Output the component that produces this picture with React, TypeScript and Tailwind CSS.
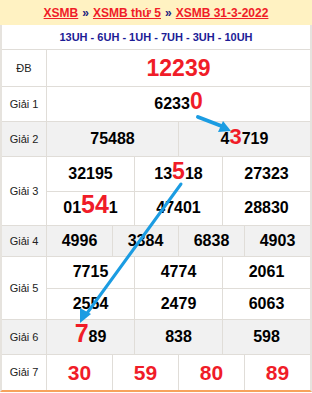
import React from "react";

const R = ({ children, size }: { children: React.ReactNode; size: string }) => (
  <span className={`${size} leading-[0] text-[#f01c28]`}>{children}</span>
);

function Cell({ children, last }: { children: React.ReactNode; last?: boolean }) {
  return (
    <div className={`flex flex-1 items-center justify-center ${last ? "" : "border-r border-[#e0ddd8]"}`}>
      {children}
    </div>
  );
}

function Row({
  label,
  gray,
  h,
  children,
}: {
  label: string;
  gray?: boolean;
  h: string;
  children: React.ReactNode;
}) {
  return (
    <div className={`flex ${h} border-b border-[#e0ddd8] ${gray ? "bg-[#f1f1f1]" : "bg-white"}`}>
      <div className="flex w-[45px] shrink-0 items-center justify-center border-r border-[#e0ddd8] text-[11px] font-normal text-[#222]">
        {label}
      </div>
      <div className="flex flex-1 flex-col">{children}</div>
    </div>
  );
}

function Line({ cells, border }: { cells: React.ReactNode[]; border?: boolean }) {
  return (
    <div className={`flex flex-1 ${border ? "border-b border-[#e0ddd8]" : ""}`}>
      {cells.map((c, i) => (
        <Cell key={i} last={i === cells.length - 1}>
          {c}
        </Cell>
      ))}
    </div>
  );
}

export default function App() {
  return (
    <div className="relative w-[312px] bg-white font-['Liberation_Sans',Arial,sans-serif]">
      {/* header */}
      <div className="flex h-[25px] items-center justify-center bg-[#fff2c2] text-[12px] font-bold">
        <span className="text-[#f01c28] underline">XSMB</span>
        <span className="mx-[4px] text-[#1a237e]">»</span>
        <span className="text-[#f01c28] underline">XSMB thứ 5</span>
        <span className="mx-[4px] text-[#1a237e]">»</span>
        <span className="text-[#f01c28] underline">XSMB 31-3-2022</span>
      </div>

      <div className="border-x-2 border-b-2 border-[#e6e3de] border-b-[#f7a35c]">
        <div className="flex h-[25px] items-center justify-center border-b border-[#e0ddd8] text-[11px] font-bold text-[#1c1c96]">
          13UH - 6UH - 1UH - 7UH - 3UH - 10UH
        </div>

        <div className="text-[16px] font-bold text-black">
          <Row label="ĐB" h="h-[37px]">
            <Line cells={[<span className="text-[23px] text-[#f01c28]">12239</span>]} />
          </Row>
          <Row label="Giải 1" h="h-[35px]">
            <Line
              cells={[
                <span>
                  6233<R size="text-[23px]">0</R>
                </span>,
              ]}
            />
          </Row>
          <Row label="Giải 2" gray h="h-[35px]">
            <Line
              cells={[
                "75488",
                <span>
                  4<R size="text-[22px]">3</R>719
                </span>,
              ]}
            />
          </Row>
          <Row label="Giải 3" h="h-[69px]">
            <Line
              border
              cells={[
                "32195",
                <span>
                  13<R size="text-[23px]">5</R>18
                </span>,
                "27323",
              ]}
            />
            <Line
              cells={[
                <span>
                  01<R size="text-[25px]">54</R>1
                </span>,
                "47401",
                "28830",
              ]}
            />
          </Row>
          <Row label="Giải 4" gray h="h-[31px]">
            <Line cells={["4996", "3384", "6838", "4903"]} />
          </Row>
          <Row label="Giải 5" h="h-[63px]">
            <Line border cells={["7715", "4774", "2061"]} />
            <Line cells={["2554", "2479", "6063"]} />
          </Row>
          <Row label="Giải 6" gray h="h-[35px]">
            <Line
              cells={[
                <span>
                  <R size="text-[25px]">7</R>89
                </span>,
                "838",
                "598",
              ]}
            />
          </Row>
          <div className="flex h-[35px] bg-white">
            <div className="flex w-[45px] shrink-0 items-center justify-center border-r border-[#e0ddd8] text-[11px] font-normal text-[#222]">
              Giải 7
            </div>
            <div className="flex flex-1 text-[21px] text-[#f01c28]">
              <Cell>30</Cell>
              <Cell>59</Cell>
              <Cell>80</Cell>
              <Cell last>89</Cell>
            </div>
          </div>
        </div>
      </div>

      {/* arrows overlay */}
      <svg className="pointer-events-none absolute left-0 top-0" width="312" height="393" viewBox="0 0 312 393">
        <g stroke="#1b9ce2" strokeLinecap="round" fill="none">
          <line x1="198" y1="117" x2="224" y2="127" strokeWidth="4" />
          <line x1="181" y1="184" x2="85" y2="316" strokeWidth="3" />
        </g>
        <g fill="#1b9ce2">
          <polygon points="231,131 218,132 223,121" />
          <polygon points="80,323 80,308 91,314" />
        </g>
      </svg>
    </div>
  );
}
